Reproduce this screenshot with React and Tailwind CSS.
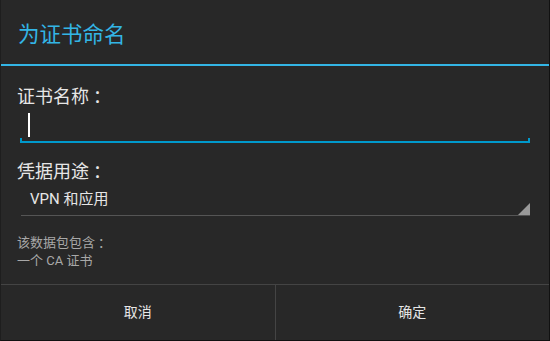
import React from 'react';

const App = () => {
  return (
    <div
      className="w-[550px] h-[341px] bg-[#282828] flex flex-col border-r border-b border-[#111] border-l border-l-[#1e1e1e] overflow-hidden text-[#e6e6e6]"
      style={{ fontFamily: '"Roboto", "Noto Sans CJK SC", sans-serif' }}
    >
      {/* Title */}
      <div className="h-[64px] flex items-center pl-[17px] pt-[6px] shrink-0">
        <span className="text-[21.5px] text-[#33b5e5] leading-none">为证书命名</span>
      </div>
      <div className="h-[2px] bg-[#33b5e5] shrink-0" />

      {/* Body */}
      <div className="flex-1 flex flex-col pl-[16px] pr-[19px]">
        <div className="mt-[22px] text-[18px] leading-none flex">
          <span>证书名称</span>
          <span className="ml-[4px]">：</span>
        </div>

        {/* Edit text */}
        <div className="relative ml-[3px] mt-[4px] h-[34px]">
          <div className="absolute left-[8px] top-[3px] w-[2px] h-[24px] bg-white" />
          <div className="absolute left-0 right-0 bottom-[1px] h-[2px] bg-[#0099cc]" />
          <div className="absolute left-0 bottom-[1px] w-[2px] h-[5px] bg-[#0099cc]" />
          <div className="absolute right-0 bottom-[1px] w-[2px] h-[5px] bg-[#0099cc]" />
        </div>

        <div className="mt-[19px] text-[18px] leading-none flex">
          <span>凭据用途</span>
          <span className="ml-[4px]">：</span>
        </div>

        {/* Spinner */}
        <div className="relative ml-[4px] h-[35px] border-b border-[#555] flex items-start pl-[9px]">
          <span className="text-[15px] leading-none mt-[11px]">VPN 和应用</span>
          <svg className="absolute right-0 bottom-0" width="12" height="12" viewBox="0 0 12 12">
            <polygon points="12,0 12,12 0,12" fill="#999" />
          </svg>
        </div>

        <div className="mt-[18px] text-[13px] leading-[18px] text-[#a8a8a8]">
          <div className="flex">
            <span>该数据包包含</span>
            <span className="ml-[3px]">：</span>
          </div>
          <div>一个 CA 证书</div>
        </div>
      </div>

      {/* Buttons */}
      <div className="h-[56px] shrink-0 border-t border-[#444] flex">
        <button className="flex-1 flex items-center justify-center text-[14px] text-[#e6e6e6] border-r border-[#444]">
          取消
        </button>
        <button className="flex-1 flex items-center justify-center text-[14px] text-[#e6e6e6]">
          确定
        </button>
      </div>
    </div>
  );
};

export default App;
